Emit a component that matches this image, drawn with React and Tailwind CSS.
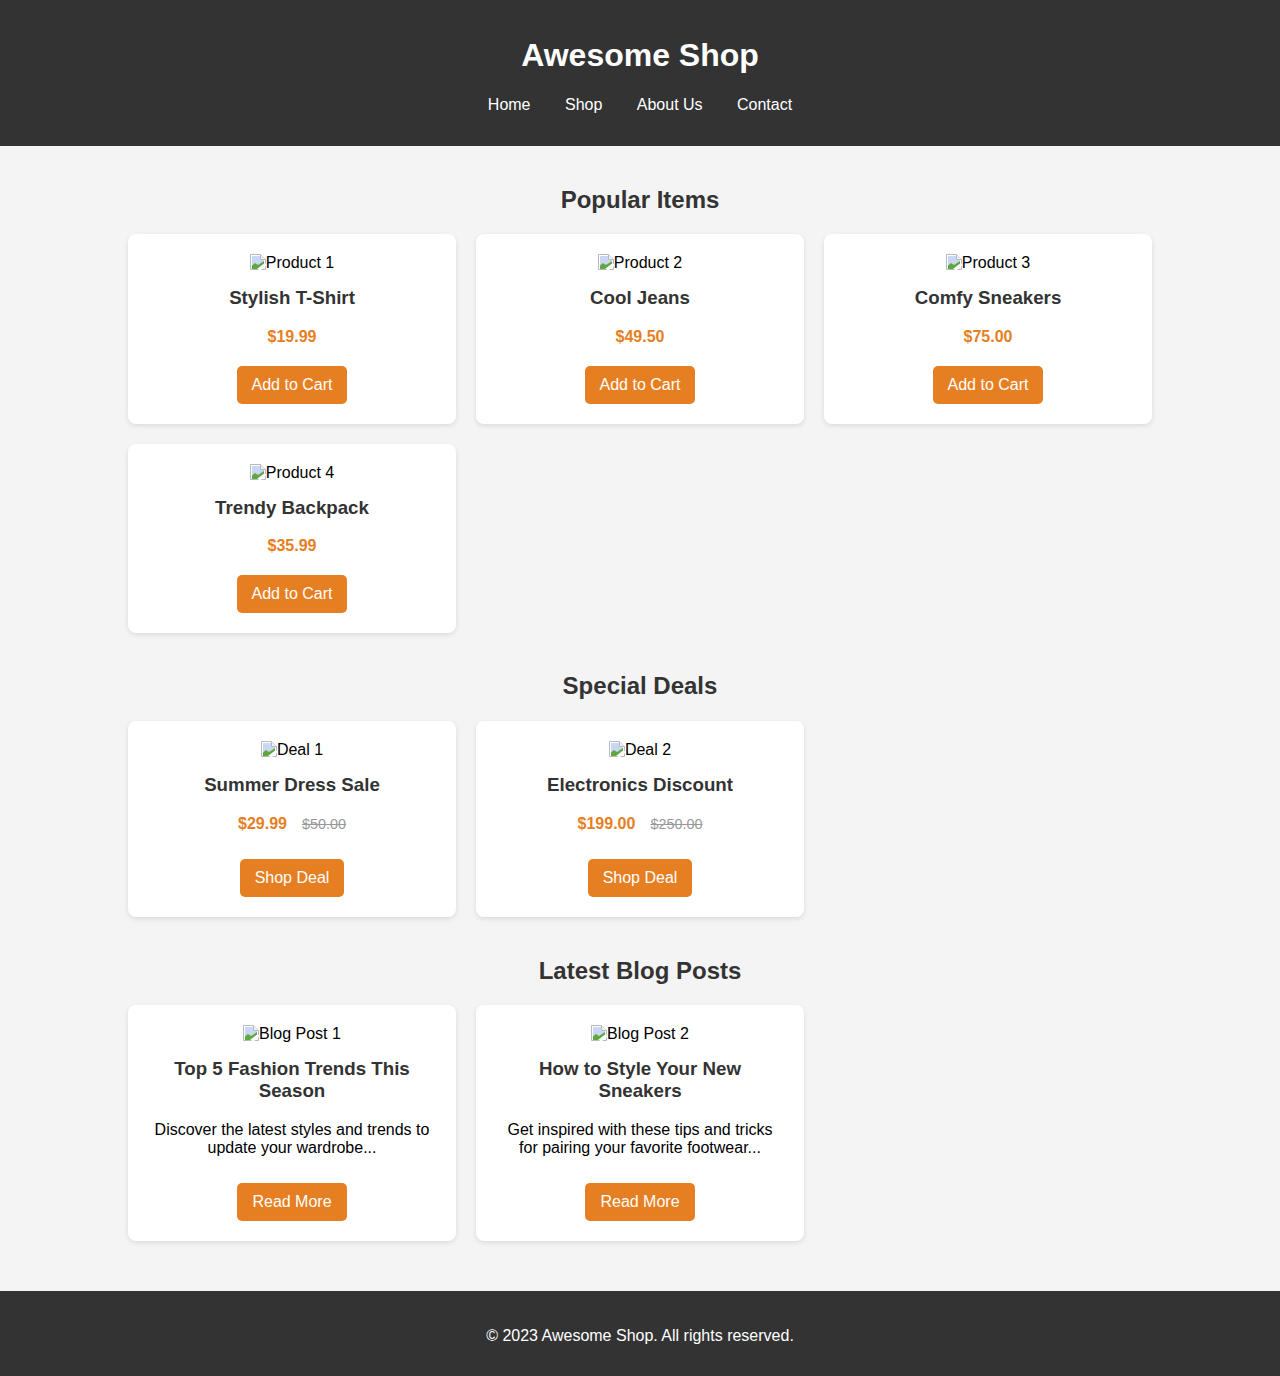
const products = [
  { alt: 'Product 1', name: 'Stylish T-Shirt', price: '$19.99' },
  { alt: 'Product 2', name: 'Cool Jeans', price: '$49.50' },
  { alt: 'Product 3', name: 'Comfy Sneakers', price: '$75.00' },
  { alt: 'Product 4', name: 'Trendy Backpack', price: '$35.99' },
];

const deals = [
  { alt: 'Deal 1', name: 'Summer Dress Sale', price: '$29.99', old: '$50.00' },
  { alt: 'Deal 2', name: 'Electronics Discount', price: '$199.00', old: '$250.00' },
];

const posts = [
  {
    alt: 'Blog Post 1',
    name: 'Top 5 Fashion Trends This Season',
    text: 'Discover the latest styles and trends to update your wardrobe...',
  },
  {
    alt: 'Blog Post 2',
    name: 'How to Style Your New Sneakers',
    text: 'Get inspired with these tips and tricks for pairing your favorite footwear...',
  },
];

function BrokenImage({ alt }) {
  return (
    <div className="h-[18px] leading-[18px] text-black">
      <svg width="16" height="16" viewBox="0 0 16 16" className="inline-block align-[-2px]">
        <path d="M0.5 0.5H10.5L15.5 5.5V15.5H0.5Z" fill="#fff" stroke="#b4b9c2" />
        <path d="M2 2H10V6H14V10L2 14Z" fill="#c9d7f5" />
        <path d="M2 15V11.5L5 9L8 11L14 7V9.5L7 15Z" fill="#5fa83e" />
        <path d="M10.5 0.5V5.5H15.5" fill="#eef1f6" stroke="#b4b9c2" />
        <path d="M8 16L16 9.5V12L11 16Z" fill="#fff" />
      </svg>
      {alt}
    </div>
  );
}

function Card({ alt, name, children }) {
  return (
    <div className="rounded-lg bg-white p-5 text-center shadow-[0_2px_5px_rgba(0,0,0,0.1)]">
      <BrokenImage alt={alt} />
      <h3 className="mt-[15px] text-[18.72px] leading-[22px] font-bold text-[#333]">{name}</h3>
      {children}
    </div>
  );
}

function Button({ children }) {
  return (
    <button className="h-[38px] rounded-[5px] bg-[#e67e22] px-[15px] text-white">{children}</button>
  );
}

function Section({ title, children }) {
  return (
    <section className="mb-[39.3px]">
      <h2 className="mb-[21.6px] text-center text-2xl leading-[27px] font-bold text-[#333]">{title}</h2>
      <div className="grid grid-cols-3 gap-5">{children}</div>
    </section>
  );
}

export default function App() {
  return (
    <div className="min-h-[1376px] bg-[#f4f4f4] font-['Liberation_Sans',Arial,sans-serif] text-base leading-[18px]">
      <header className="h-[146px] bg-[#333] pt-[37px] text-center text-white">
        <h1 className="text-[32px] leading-[37px] font-bold">Awesome Shop</h1>
        <nav className="mt-[22px] flex justify-center gap-[34.45px]">
          <a href="#">Home</a>
          <a href="#">Shop</a>
          <a href="#">About Us</a>
          <a href="#">Contact</a>
        </nav>
      </header>

      <main className="mx-auto w-[1024px] pt-[39.7px]">
        <Section title="Popular Items">
          {products.map((p) => (
            <Card key={p.alt} alt={p.alt} name={p.name}>
              <p className="mt-[18.7px] mb-[19.74px] font-bold text-[#e67e22]">{p.price}</p>
              <Button>Add to Cart</Button>
            </Card>
          ))}
        </Section>

        <Section title="Special Deals">
          {deals.map((d) => (
            <Card key={d.alt} alt={d.alt} name={d.name}>
              <p className="mt-[18.7px] mb-[26.6px]">
                <span className="font-bold text-[#e67e22]">{d.price}</span>
                <span className="ml-[15px] text-[14.4px] text-[#999] line-through">{d.old}</span>
              </p>
              <Button>Shop Deal</Button>
            </Card>
          ))}
        </Section>

        <Section title="Latest Blog Posts">
          {posts.map((b) => (
            <Card key={b.alt} alt={b.alt} name={b.name}>
              <p className="mt-[19px] mb-[26px] text-black">{b.text}</p>
              <Button>Read More</Button>
            </Card>
          ))}
        </Section>
      </main>

      <footer className="mt-[50px] h-[85px] bg-[#333] pt-[36px] text-center text-white">
        © 2023 Awesome Shop. All rights reserved.
      </footer>
    </div>
  );
}
